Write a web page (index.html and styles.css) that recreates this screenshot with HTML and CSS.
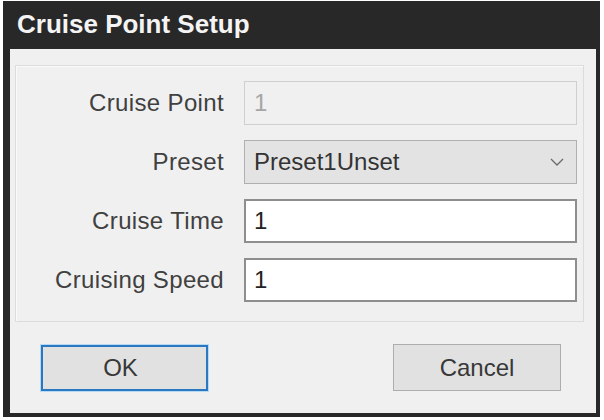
FILE: index.html
```html
<!DOCTYPE html>
<html lang="en">
<head>
  <meta charset="UTF-8" />
  <meta name="viewport" content="width=device-width, initial-scale=1.0" />
  <title>Cruise Point Setup</title>
  <link rel="stylesheet" href="styles.css">
</head>
<body>

  <div class="dialog">
    <div class="dialog-title">Cruise Point Setup</div>

    <div class="dialog-body">
      <div class="group-box">
        <label class="field-label">Cruise Point</label>
        <input class="field field-disabled" type="text" value="1" disabled>

        <label class="field-label">Preset</label>
        <div class="field field-select">
          <span>Preset1Unset</span>
          <svg class="chevron" width="14" height="8" viewBox="0 0 14 8">
            <path d="M1 1 L7 7 L13 1" fill="none" stroke="#6a6a6a" stroke-width="1.3" />
          </svg>
        </div>

        <label class="field-label">Cruise Time</label>
        <input class="field" type="text" value="1">

        <label class="field-label">Cruising Speed</label>
        <input class="field" type="text" value="1">
      </div>

      <div class="button-row">
        <button class="btn btn-default">OK</button>
        <button class="btn">Cancel</button>
      </div>
    </div>
  </div>

</body>
</html>
```

FILE: styles.css
```css
* {
  box-sizing: border-box;
}
body {
  margin: 0;
  padding: 1px 4px 3px 3px;
  background: #ffffff;
  font-family: 'Liberation Sans', Arial, sans-serif;
}
.dialog {
  width: 597px;
  height: 416px;
  background: #282828;
  padding: 0 4px 4px 7px;
  display: flex;
  flex-direction: column;
}
.dialog-title {
  height: 48px;
  display: flex;
  align-items: center;
  padding: 0 0 2px 7px;
  color: #f4f4f4;
  font-size: 26px;
  font-weight: bold;
}
.dialog-body {
  flex: 1;
  background: #f0f0f0;
  padding: 16px 12px 0 5px;
}
.group-box {
  border: 1px solid #dcdcdc;
  box-shadow: inset 1px 1px 0 #fafafa;
  display: grid;
  grid-template-columns: 208px 333px;
  column-gap: 20px;
  row-gap: 15px;
  padding: 15px 6px 19px 0;
  align-items: center;
}
.field-label {
  text-align: right;
  font-size: 24px;
  letter-spacing: 0.35px;
  color: #404040;
}
.field {
  height: 44px;
  width: 100%;
  font-family: 'Liberation Sans', Arial, sans-serif;
  font-size: 24px;
  color: #222;
  background: #ffffff;
  border: 2px solid #8e8e8e;
  padding: 0 8px;
  margin: 0;
  outline: none;
}
.field-disabled {
  background: #f0f0f0;
  border: 1px solid #cfcfcf;
  color: #a6a6a6;
  padding-left: 9px;
}
.field-select {
  display: flex;
  align-items: center;
  justify-content: space-between;
  background: #e3e3e3;
  border: 1px solid #b0b0b0;
  padding: 0 12px 0 9px;
  color: #333;
}
.chevron {
  display: block;
}
.button-row {
  display: flex;
  justify-content: space-between;
  padding: 22px 23px 0 26px;
}
.btn {
  width: 168px;
  height: 47px;
  font-family: 'Liberation Sans', Arial, sans-serif;
  font-size: 24px;
  color: #383838;
  background: #e1e1e1;
  border: 1px solid #adadad;
  padding: 0;
}
.btn-default {
  width: 167px;
  margin-top: 1px;
  height: 46px;
  padding-right: 8px;
  border: 2px solid #2a78c0;
  box-shadow: 0 0 0 1px #b6daf6;
}
```
